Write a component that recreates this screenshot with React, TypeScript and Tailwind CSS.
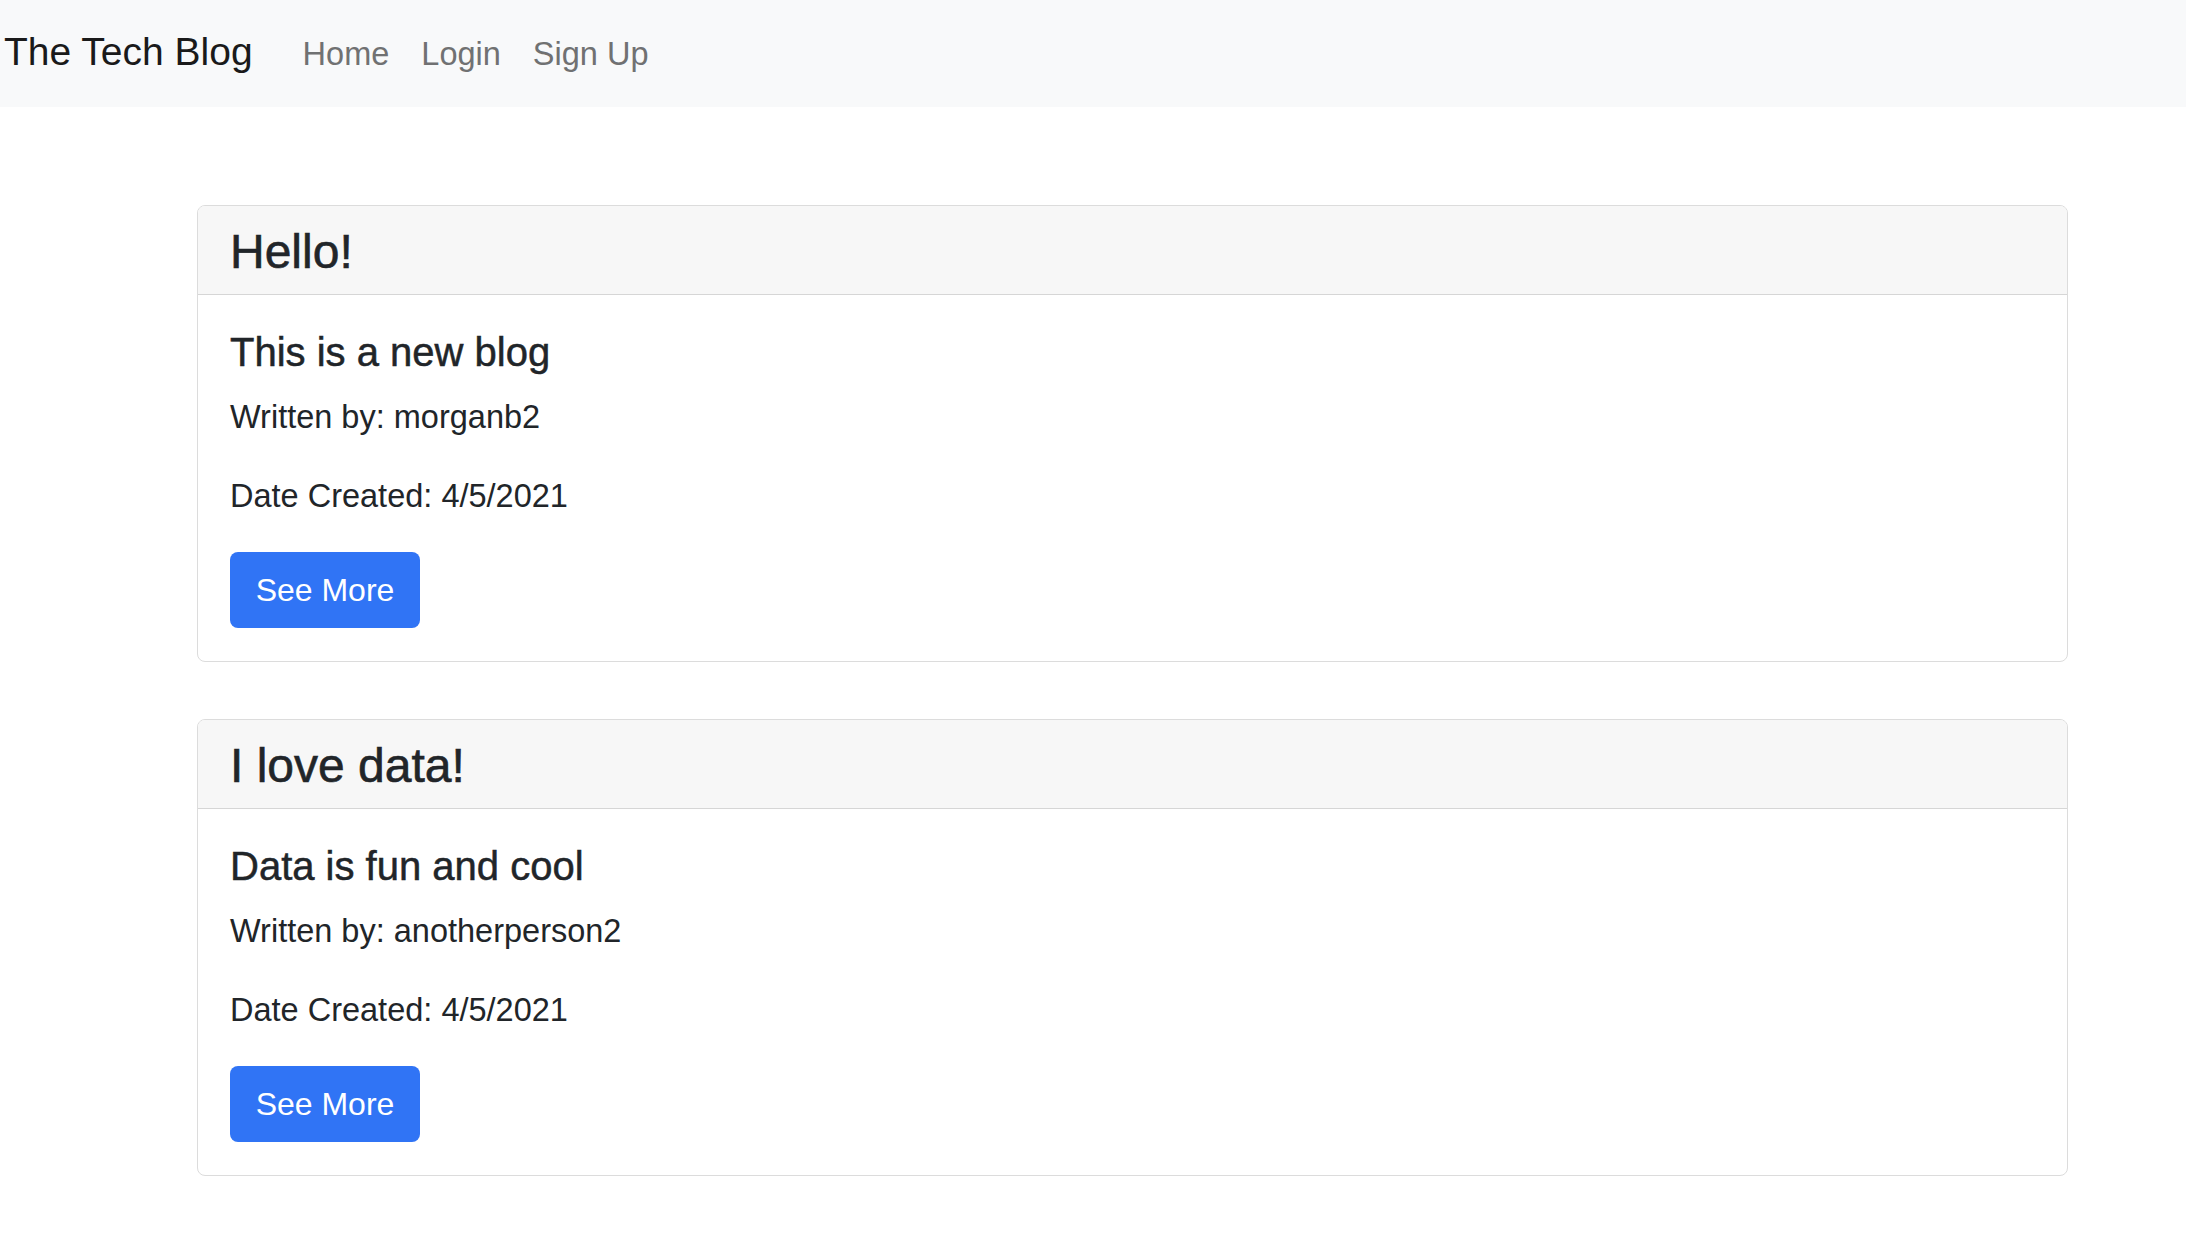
import React from 'react'

interface Post {
  heading: string
  title: string
  author: string
  date: string
}

const POSTS: Post[] = [
  { heading: 'Hello!', title: 'This is a new blog', author: 'morganb2', date: '4/5/2021' },
  { heading: 'I love data!', title: 'Data is fun and cool', author: 'anotherperson2', date: '4/5/2021' },
]

function NavBar() {
  return (
    <nav className="flex h-[107px] items-baseline bg-[#f8f9fa] pl-[4px] pt-[23px]">
      <a href="#" className="mr-[34px] text-[39px] leading-[57px] text-[#1a1a1a]">
        The Tech Blog
      </a>
      <ul className="flex items-baseline">
        {['Home', 'Login', 'Sign Up'].map((label) => (
          <li key={label}>
            <a href="#" className="px-[16px] text-[32.5px] leading-[48px] text-[#707172]">
              {label}
            </a>
          </li>
        ))}
      </ul>
    </nav>
  )
}

function PostCard({ post }: { post: Post }) {
  return (
    <div className="overflow-hidden rounded-[8px] border border-[#dcdcdc] bg-white">
      <div className="h-[89px] border-b border-[#d6d6d6] bg-[#f7f7f7] px-[32px] pt-[20px]">
        <h4 className="text-[48px] leading-[52px] text-[#212529] [-webkit-text-stroke:0.6px_#212529]">
          {post.heading}
        </h4>
      </div>
      <div className="px-[32px] pb-[33px] pt-[34px] text-[#212529]">
        <h5 className="mb-[17px] text-[40px] leading-[47px] [-webkit-text-stroke:0.5px_#212529]">
          {post.title}
        </h5>
        <p className="mb-[31px] text-[32.5px] leading-[48px]">Written by: {post.author}</p>
        <p className="mb-[32px] text-[32.5px] leading-[48px]">Date Created: {post.date}</p>
        <button className="flex h-[76px] w-[190px] items-center justify-center rounded-[8px] bg-[#3074f5] text-[32px] leading-[46px] text-white">
          See More
        </button>
      </div>
    </div>
  )
}

export default function App() {
  return (
    <div className="min-h-screen bg-white font-['Liberation_Sans',Arial,sans-serif]">
      <NavBar />
      <main className="ml-[197px] mt-[98px] flex w-[1871px] flex-col gap-[57px]">
        {POSTS.map((post) => (
          <PostCard key={post.heading} post={post} />
        ))}
      </main>
    </div>
  )
}
